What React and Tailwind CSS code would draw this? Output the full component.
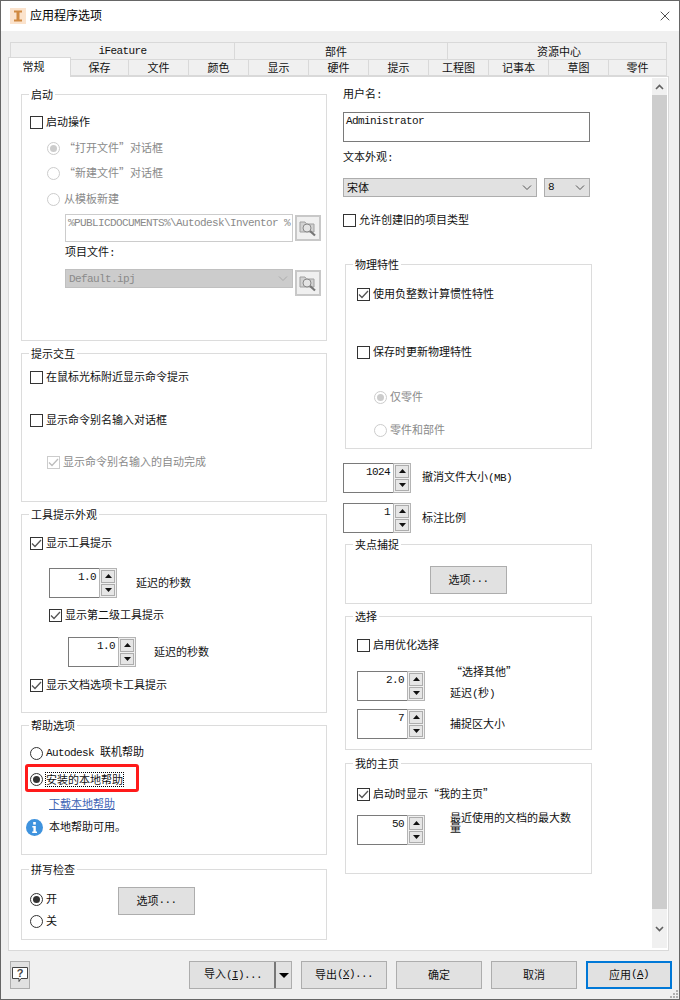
import { X } from "lucide-react";

const Lat = ({ children }) => (
  <span className="font-['Liberation_Mono',monospace] text-[11px] tracking-[-0.6px]">{children}</span>
);

function Check({ label, checked, disabled, className = "" }) {
  return (
    <div className={`flex h-[13px] items-center gap-[3px] ${disabled ? "text-[#8a8a8a]" : ""} ${className}`}>
      <span className={`flex h-[13px] w-[13px] shrink-0 items-center justify-center border ${disabled ? "border-[#cccccc]" : "border-[#333333]"}`}>
        {checked && (
          <svg width="11" height="11" viewBox="0 0 11 11" fill="none" stroke={disabled ? "#bdbdbd" : "#555555"} strokeWidth="1.3">
            <path d="M1 5.5 L4 8.5 L10 2" />
          </svg>
        )}
      </span>
      <span className="whitespace-nowrap pb-[2px] leading-[13px]">{label}</span>
    </div>
  );
}

function Radio({ label, checked, disabled, gap = "gap-[3px]", className = "", focus }) {
  return (
    <div className={`flex h-[13px] items-center ${gap} ${disabled ? "text-[#8a8a8a]" : ""} ${className}`}>
      <span className={`flex h-[13px] w-[13px] shrink-0 items-center justify-center rounded-full border ${disabled ? "border-[#cccccc]" : "border-[#333333]"}`}>
        {checked && <span className={`h-[7px] w-[7px] rounded-full ${disabled ? "bg-[#cccccc]" : "bg-[#333333]"}`} />}
      </span>
      <span className={`whitespace-nowrap leading-[13px] ${focus ? "outline-1 outline-dotted outline-black" : "pb-[2px]"}`}>{label}</span>
    </div>
  );
}

function Group({ title, className = "", children }) {
  return (
    <div className={`relative border border-[#dcdcdc] ${className}`}>
      <span className="absolute -top-[7px] left-[7px] whitespace-nowrap bg-white px-[2px] leading-[13px]">{title}</span>
      {children}
    </div>
  );
}

const SpinArrow = ({ up }) => (
  <svg width="7" height="4" viewBox="0 0 7 4" fill="#111111">
    <path d={up ? "M3.5 0 L7 4 L0 4 Z" : "M0 0 L7 0 L3.5 4 Z"} />
  </svg>
);

function Spinner({ value, className = "" }) {
  return (
    <div className={`flex h-[30px] w-[68px] shrink-0 ${className}`}>
      <div className="h-full w-[50px] border-y border-l border-[#7a7a7a] pr-[3px] text-right leading-[13px]">
        <Lat>{value}</Lat>
      </div>
      <div className="flex w-[18px] flex-col gap-[1px] border border-[#b4b4b4] bg-[#f0f0f0] p-[1px]">
        <div className="flex flex-1 items-center justify-center border border-[#adadad] bg-[#e6e6e6]"><SpinArrow up /></div>
        <div className="flex flex-1 items-center justify-center border border-[#adadad] bg-[#e6e6e6]"><SpinArrow /></div>
      </div>
    </div>
  );
}

const Chevron = ({ color = "#555555" }) => (
  <svg width="10" height="6" viewBox="0 0 10 6" fill="none" stroke={color} strokeWidth="1">
    <path d="M1 0.5 L5 4.5 L9 0.5" />
  </svg>
);

function Btn({ children, primary, className = "" }) {
  return (
    <div className={`flex h-[28px] items-center justify-center bg-[#e1e1e1] pb-[2px] ${primary ? "border-2 border-[#0078d7]" : "border border-[#adadad]"} ${className}`}>
      {children}
    </div>
  );
}

function Browse({ className = "" }) {
  return (
    <div className={`flex h-[26px] w-[26px] shrink-0 items-center justify-center border-2 border-[#c8c8c8] bg-[#f0f0f0] ${className}`}>
      <svg width="18" height="18" viewBox="0 0 18 18">
        <path d="M1 3 H6 L7.5 5 H15 V13 H1 Z" fill="#d2d2d2" stroke="#a0a0a0" />
        <circle cx="8" cy="9" r="4" fill="#e4e4e4" stroke="#8a8a8a" />
        <path d="M11 12 L16 16.5" stroke="#777777" strokeWidth="2.2" />
      </svg>
    </div>
  );
}

const tabs = [
  ["保存", "w-[58px]"], ["文件", "w-[60px]"], ["颜色", "w-[60px]"], ["显示", "w-[60px]"], ["硬件", "w-[60px]"],
  ["提示", "w-[60px]"], ["工程图", "w-[60px]"], ["记事本", "w-[60px]"], ["草图", "w-[60px]"], ["零件", "w-[58px]"],
];

function LeftColumn() {
  return (
    <div className="w-[306px] shrink-0 pt-[17px]">
      <Group title="启动" className="h-[247px] pl-[8px]">
        <Check label="启动操作" className="mt-[21px]" />
        <Radio label="“打开文件”对话框" checked disabled gap="gap-[4px]" className="mt-[13px] ml-[17px]" />
        <Radio label="“新建文件”对话框" disabled gap="gap-[4px]" className="mt-[12px] ml-[17px]" />
        <Radio label="从模板新建" disabled gap="gap-[4px]" className="mt-[13px] ml-[17px]" />
        <div className="mt-[8px] ml-[35px] flex gap-[2px]">
          <div className="h-[28px] w-[228px] overflow-hidden border border-[#cccccc] pl-[2px] leading-[13px] whitespace-nowrap text-[#8a8a8a]">
            <Lat>%PUBLICDOCUMENTS%\Autodesk\Inventor %</Lat>
          </div>
          <Browse className="mt-[1px]" />
        </div>
        <div className="mt-[3px] ml-[35px] h-[13px] leading-[13px]">项目文件<Lat>:</Lat></div>
        <div className="mt-[11px] ml-[35px] flex gap-[2px]">
          <div className="flex h-[19px] w-[228px] items-center justify-between border border-[#c0c0c0] bg-[#cccccc] pt-[1px] pr-[4px] pl-[3px] text-[#8a8a8a]">
            <Lat>Default.ipj</Lat>
            <Chevron color="#aaaaaa" />
          </div>
          <Browse className="mt-[1px]" />
        </div>
      </Group>

      <Group title="提示交互" className="mt-[12px] h-[149px] pl-[8px]">
        <Check label="在鼠标光标附近显示命令提示" className="mt-[17px]" />
        <Check label="显示命令别名输入对话框" className="mt-[30px]" />
        <Check label="显示命令别名输入的自动完成" checked disabled className="mt-[29px] ml-[17px]" />
      </Group>

      <Group title="工具提示外观" className="mt-[12px] h-[199px] pl-[8px]">
        <Check label="显示工具提示" checked className="mt-[22px]" />
        <div className="mt-[18px] ml-[19px] flex items-center gap-[19px]">
          <Spinner value="1.0" />
          <span className="pb-[2px]">延迟的秒数</span>
        </div>
        <Check label="显示第二级工具提示" checked className="mt-[11px] ml-[19px]" />
        <div className="mt-[15px] ml-[38px] flex items-center gap-[18px]">
          <Spinner value="1.0" />
          <span className="pb-[2px]">延迟的秒数</span>
        </div>
        <Check label="显示文档选项卡工具提示" checked className="mt-[12px]" />
      </Group>

      <Group title="帮助选项" className="mt-[12px] h-[130px] pl-[8px]">
        <Radio label={<><Lat>Autodesk </Lat>联机帮助</>} className="mt-[21px]" />
        <div className="relative mt-[13px]">
          <Radio label="安装的本地帮助" checked focus />
          <div className="absolute -top-[9px] -left-[5px] h-[28px] w-[114px] rounded-[3px] border-[3px] border-[#ff1a1a]" />
        </div>
        <div className="mt-[11px] ml-[19px] w-fit leading-[13px] text-[#3f66b5] underline">下载本地帮助</div>
        <div className="-ml-[4px] mt-[8px] flex items-center gap-[6px]">
          <svg width="17" height="17" viewBox="0 0 17 17">
            <circle cx="8.5" cy="8.5" r="8.5" fill="#3f93de" />
            <rect x="7.2" y="3" width="2.6" height="2.6" fill="#ffffff" />
            <path d="M6.3 7 H9.8 V12.6 H11 V14 H6.2 V12.6 H7.4 V8.4 H6.3 Z" fill="#ffffff" />
          </svg>
          <span className="pb-[2px]">本地帮助可用。</span>
        </div>
      </Group>

      <Group title="拼写检查" className="mt-[14px] flex h-[71px] items-start pl-[8px]">
        <div className="w-[88px]">
          <Radio label="开" checked className="mt-[23px]" />
          <Radio label="关" className="mt-[9px]" />
        </div>
        <Btn className="mt-[17px] w-[77px]">选项<Lat>...</Lat></Btn>
      </Group>
    </div>
  );
}

function RightColumn() {
  return (
    <div className="ml-[16px] w-[249px] shrink-0 pt-[10px]">
      <div className="h-[13px] leading-[13px]">用户名<Lat>:</Lat></div>
      <div className="mt-[12px] h-[30px] w-[247px] border border-[#7a7a7a] pl-[2px] leading-[13px]">
        <Lat>Administrator</Lat>
      </div>
      <div className="mt-[8px] h-[13px] leading-[13px]">文本外观<Lat>:</Lat></div>
      <div className="mt-[15px] flex w-[247px] gap-[7px]">
        <div className="flex h-[19px] w-[194px] items-center justify-between border border-[#adadad] bg-[#e1e1e1] pr-[4px] pl-[3px]">
          <span className="pb-[1px]">宋体</span>
          <Chevron />
        </div>
        <div className="flex h-[19px] w-[46px] items-center justify-between border border-[#adadad] bg-[#e1e1e1] pr-[4px] pl-[3px]">
          <Lat>8</Lat>
          <Chevron />
        </div>
      </div>
      <Check label="允许创建旧的项目类型" className="mt-[17px]" />

      <Group title="物理特性" className="mt-[37px] ml-[2px] h-[185px] w-[247px] pl-[11px]">
        <Check label="使用负整数计算惯性特性" checked className="mt-[23px]" />
        <Check label="保存时更新物理特性" className="mt-[45px]" />
        <Radio label="仅零件" checked disabled className="mt-[32px] ml-[17px]" />
        <Radio label="零件和部件" disabled className="mt-[20px] ml-[17px]" />
      </Group>

      <div className="mt-[14px] flex items-center gap-[11px]">
        <Spinner value="1024" />
        <span className="pb-[1px]">撤消文件大小<Lat>(MB)</Lat></span>
      </div>
      <div className="mt-[10px] flex items-center gap-[11px]">
        <Spinner value="1" />
        <span className="pb-[2px]">标注比例</span>
      </div>

      <Group title="夹点捕捉" className="mt-[11px] ml-[2px] h-[60px] w-[247px] pl-[11px]">
        <Btn className="mt-[21px] ml-[73px] w-[77px]">选项<Lat>...</Lat></Btn>
      </Group>

      <Group title="选择" className="mt-[12px] ml-[2px] h-[134px] w-[247px] pl-[11px]">
        <Check label="启用优化选择" className="mt-[22px]" />
        <div className="mt-[19px] flex items-start gap-[25px]">
          <Spinner value="2.0" />
          <div className="-mt-[6px] leading-[13px]">
            <div className="ml-[1px]">“选择其他”</div>
            <div className="mt-[8px]">延迟<Lat>(</Lat>秒<Lat>)</Lat></div>
          </div>
        </div>
        <div className="mt-[8px] flex items-center gap-[25px]">
          <Spinner value="7" />
          <span className="pb-[2px]">捕捉区大小</span>
        </div>
      </Group>

      <Group title="我的主页" className="mt-[13px] ml-[2px] h-[111px] w-[247px] pl-[11px]">
        <Check label="启动时显示“我的主页”" checked className="mt-[24px]" />
        <div className="mt-[14px] flex items-start gap-[25px]">
          <Spinner value="50" />
          <div className="-mt-[3px] w-[122px] leading-[10px]">最近使用的文档的最大数量</div>
        </div>
      </Group>
    </div>
  );
}

export default function App() {
  return (
    <div className="relative flex h-[1000px] w-[680px] flex-col overflow-hidden border border-[#666666] bg-[#f0f0f0] font-['Noto_Sans_CJK_SC',sans-serif] text-[11px] text-[#111111]">
      <div className="flex h-[30px] shrink-0 items-center justify-between bg-white pr-[6px] pl-[9px]">
        <div className="flex items-center gap-[4px]">
          <svg width="16" height="16" viewBox="0 0 16 16">
            <rect width="16" height="16" fill="#fbe3cd" />
            <path d="M4 2.5 H12 V4.5 H9.5 V11.5 H12 V13.5 H4 V11.5 H6.5 V4.5 H4 Z" fill="#d08a42" />
          </svg>
          <span className="pb-[2px] text-[12px] text-black">应用程序选项</span>
        </div>
        <X size={16} strokeWidth={1.2} color="#222222" />
      </div>

      <div className="flex flex-1 flex-col px-[7px]">
        <div className="mt-[11px] ml-[2px] flex h-[18px] w-[657px] border border-[#d9d9d9]">
          <div className="flex w-[224px] items-center justify-center border-r border-[#d9d9d9]"><Lat>iFeature</Lat></div>
          <div className="flex w-[213px] items-center justify-center border-r border-[#d9d9d9] pr-[10px]">部件</div>
          <div className="flex flex-1 items-center justify-center pl-[4px]">资源中心</div>
        </div>
        <div className="flex h-[16px]">
          <div className="relative z-10 -mt-[3px] flex h-[20px] w-[63px] items-start justify-center border-x border-t border-[#d9d9d9] bg-white pr-[12px]">常规</div>
          {tabs.map(([name, w]) => (
            <div key={name} className={`flex items-center justify-center border-r border-b border-[#d9d9d9] ${w}`}>{name}</div>
          ))}
        </div>

        <div className="flex h-[875px] w-[661px] border border-[#d9d9d9] bg-white">
          <div className="flex flex-1 pl-[12px]">
            <LeftColumn />
            <RightColumn />
          </div>
          <div className="mt-[1px] mb-[2px] mr-[1px] flex w-[15px] shrink-0 flex-col bg-[#f0f0f0]">
            <div className="flex h-[17px] items-center justify-center">
              <svg width="9" height="6" viewBox="0 0 9 6" fill="none" stroke="#606060" strokeWidth="1.6"><path d="M1 5 L4.5 1.5 L8 5" /></svg>
            </div>
            <div className="h-[814px] bg-[#cdcdcd]" />
            <div className="flex flex-1 items-center justify-center">
              <svg width="9" height="6" viewBox="0 0 9 6" fill="none" stroke="#606060" strokeWidth="1.6"><path d="M1 1 L4.5 4.5 L8 1" /></svg>
            </div>
          </div>
        </div>

        <div className="mt-[10px] flex items-start pl-[2px]">
          <div className="flex h-[28px] w-[20px] items-center justify-center border border-[#adadad] bg-[#e1e1e1]">
            <svg width="16" height="18" viewBox="0 0 16 18">
              <path d="M0.5 1.5 H15.5 V12.5 H9 L7 15.5 V12.5 H0.5 Z" fill="#ffffff" stroke="#444444" />
              <text x="8" y="10.5" textAnchor="middle" fontSize="11" fontWeight="700" fill="#444444" fontFamily="Liberation Sans">?</text>
            </svg>
          </div>
          <div className="ml-[159px] flex h-[28px] w-[103px] items-center border border-[#adadad] bg-[#e1e1e1]">
            <span className="flex-1 pb-[2px] pl-[2px] text-center">导入<Lat>(<u>I</u>)...</Lat></span>
            <span className="h-[26px] w-[2px] bg-[#777777]" />
            <span className="flex w-[15px] justify-center">
              <svg width="10" height="5" viewBox="0 0 10 5"><path d="M0 0 H10 L5 5 Z" fill="#000000" /></svg>
            </span>
          </div>
          <Btn className="ml-[9px] w-[86px]">导出<Lat>(<u>X</u>)...</Lat></Btn>
          <Btn className="ml-[9px] w-[86px]">确定</Btn>
          <Btn className="ml-[9px] w-[86px]">取消</Btn>
          <Btn primary className="ml-[9px] w-[86px]">应用<Lat>(<u>A</u>)</Lat></Btn>
        </div>
      </div>

      <svg className="absolute right-0 bottom-0" width="9" height="9" viewBox="0 0 9 9" fill="#b0b0b0">
        <rect x="6" y="0" width="2" height="2" />
        <rect x="3" y="3" width="2" height="2" />
        <rect x="6" y="3" width="2" height="2" />
        <rect x="0" y="6" width="2" height="2" />
        <rect x="3" y="6" width="2" height="2" />
        <rect x="6" y="6" width="2" height="2" />
      </svg>
    </div>
  );
}
